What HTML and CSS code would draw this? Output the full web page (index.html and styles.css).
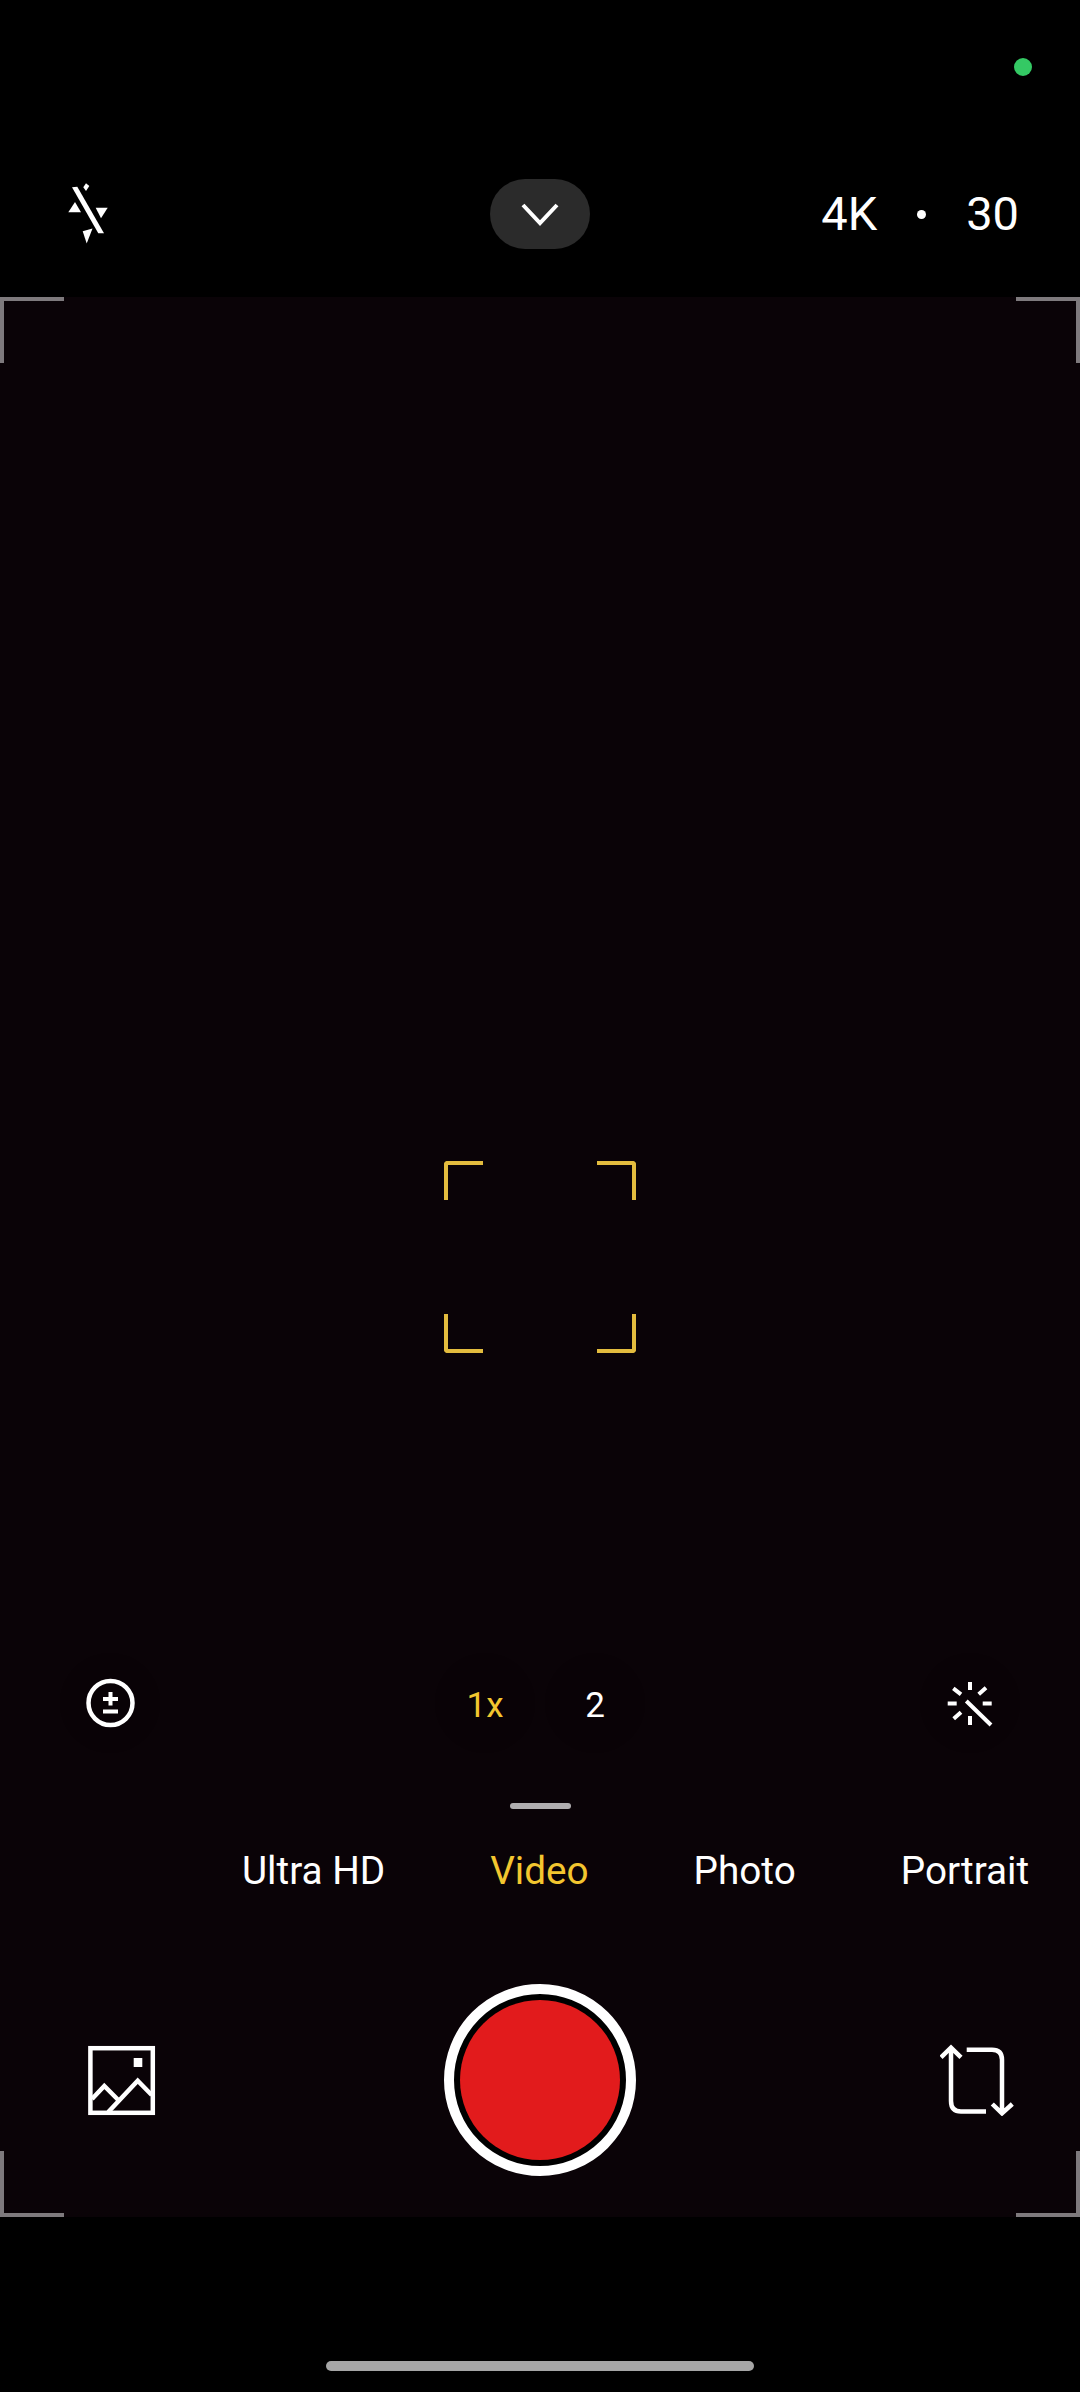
FILE: index.html
```html
<!DOCTYPE html>
<html lang="en">

<head>
  <meta charset="UTF-8">
  <title>Camera</title>
  <meta name="viewport" content="width=device-width, initial-scale=1.0">
  <link rel="stylesheet" href="styles.css">
</head>

<body>
  <header class="top">
    <div class="status"><i class="status-dot"></i></div>
    <div class="toolbar">
      <svg class="flash" viewBox="0 0 48 68" aria-label="Flash off">
        <polygon points="8,7.3 13.3,6.7 40,53.3 34.3,53.3"/>
        <polygon points="19.3,7.3 22,3.3 25.3,6 22,11"/>
        <polygon points="4.3,32.3 11,22 17,32.3"/>
        <polygon points="31.7,27.7 43.7,27.7 37,38.3"/>
        <polygon points="18.7,51.3 28.5,48.5 22.7,63.5"/>
      </svg>
      <div class="more">
        <svg viewBox="0 0 38 24" class="chevron"><path d="M2 3 L19 21 L36 3"/></svg>
      </div>
      <div class="format">
        <span>4K</span>
        <i class="format-dot"></i>
        <span>30</span>
      </div>
    </div>
  </header>

  <main class="preview">
    <!-- viewfinder corners -->
    <span class="mark mark-tl"></span>
    <span class="mark mark-tr"></span>
    <span class="mark mark-bl"></span>
    <span class="mark mark-br"></span>

    <!-- focus box -->
    <div class="focus">
      <span class="arm arm-tl"></span>
      <span class="arm arm-tr"></span>
      <span class="arm arm-bl"></span>
      <span class="arm arm-br"></span>
    </div>

    <div class="controls">
      <div class="round">
        <svg class="line" viewBox="0 0 100 100" aria-label="Exposure">
          <circle cx="50.5" cy="50" r="22"/>
          <path class="thin" d="M43 46 H58 M50.5 39 V52.5 M43 58.5 H58"/>
        </svg>
      </div>
      <div class="zoom">
        <button class="round zoom-btn active">1x</button>
        <button class="round zoom-btn">2</button>
      </div>
      <div class="round">
        <svg class="line" viewBox="0 0 100 100" aria-label="Filters">
          <path class="thin" d="M50 29 V37 M27.7 50.5 H36.7 M62.7 50.5 H71.7 M50 63 V72 M33.3 35.3 L41 41.3 M58.7 41.3 L66 34.7 M33.7 65.7 L41 59.3 M46.3 48 L71 72"/>
        </svg>
      </div>
    </div>

    <div class="handle"></div>

    <nav class="modes">
      <span>Ultra HD</span>
      <span class="active">Video</span>
      <span>Photo</span>
      <span>Portrait</span>
    </nav>

    <div class="capture">
      <svg class="line gallery" viewBox="0 0 70 72" aria-label="Gallery">
        <rect x="4.4" y="4.2" width="62.4" height="64.6"/>
        <rect class="sun" x="47.7" y="14" width="8.6" height="9"/>
        <path d="M6 55 L18.3 42 L32.3 56 M22.3 68 L51.7 36.7 L65.7 51"/>
      </svg>
      <button class="shutter"><i></i></button>
      <svg class="line flip" viewBox="0 0 74 72" aria-label="Switch camera">
        <path d="M11 5 V57 Q11 67.5 21 67.5 H46 M1 13.3 L11 3.7 L21 13.3"/>
        <path d="M26.7 5.7 H52 Q62 5.7 62 15.7 V68 M52.3 60 L62 69.3 L72.3 60"/>
      </svg>
    </div>
  </main>

  <footer class="bottom">
    <div class="home-bar"></div>
  </footer>
</body>

</html>
```

FILE: styles.css
```css
/* Colors */
:root {
  --black: #000000;
  --preview-bg: #0a0307;
  --white: #ffffff;
  --yellow: #f3c62f;
  --focus: #e3bc3e;
  --mark: #7e7a7d;
}

* {
  box-sizing: border-box;
}

html, body {
  margin: 0;
  background-color: var(--black);
}

body {
  width: 1080px;
  height: 2392px;
  overflow: hidden;
  font-family: Roboto, sans-serif;
  color: var(--white);
}

button {
  font: inherit;
  color: inherit;
  background: none;
  border: none;
  padding: 0;
}

/* top bar */
.top {
  height: 297px;
  padding-top: 58px;
}

.status {
  display: flex;
  justify-content: flex-end;
  padding-right: 48px;
}
.status-dot {
  width: 18px;
  height: 18px;
  border-radius: 50%;
  background-color: #34c964;
}

.toolbar {
  display: grid;
  grid-template-columns: 1fr 100px 1fr;
  align-items: center;
  margin-top: 103px;
  height: 70px;
}

.flash {
  width: 48px;
  height: 68px;
  margin-left: 64px;
  fill: var(--white);
}

.more {
  display: flex;
  align-items: center;
  justify-content: center;
  height: 70px;
  border-radius: 35px;
  background-color: #2b2b2b;
}
.chevron {
  width: 38px;
  height: 24px;
  fill: none;
  stroke: var(--white);
  stroke-width: 4;
}

.format {
  display: flex;
  align-items: center;
  justify-content: flex-end;
  gap: 40px;
  padding-right: 61px;
  font-size: 47px;
  line-height: 70px;
}
.format-dot {
  width: 9px;
  height: 9px;
  border-radius: 50%;
  background-color: var(--white);
}

/* viewfinder */
.preview {
  position: relative;
  height: 1920px;
  padding-top: 1356px;
  background-color: var(--preview-bg);
}

.mark {
  position: absolute;
  width: 64px;
  height: 66px;
  border: 0 solid var(--mark);
}
.mark-tl { top: 0; left: 0; border-width: 4px 0 0 4px }
.mark-tr { top: 0; right: 0; border-width: 4px 4px 0 0 }
.mark-bl { bottom: 0; left: 0; border-width: 0 0 4px 4px }
.mark-br { bottom: 0; right: 0; border-width: 0 4px 4px 0 }

.focus {
  position: absolute;
  top: 864px;
  left: 444px;
  width: 192px;
  height: 192px;
}
.arm {
  position: absolute;
  width: 39px;
  height: 39px;
  border: 0 solid var(--focus);
}
.arm-tl { top: 0; left: 0; border-width: 4px 0 0 4px; border-top-left-radius: 4px }
.arm-tr { top: 0; right: 0; border-width: 4px 4px 0 0; border-top-right-radius: 4px }
.arm-bl { bottom: 0; left: 0; border-width: 0 0 4px 4px; border-bottom-left-radius: 4px }
.arm-br { bottom: 0; right: 0; border-width: 0 4px 4px 0; border-bottom-right-radius: 4px }

/* exposure, zoom, filters */
.controls {
  display: flex;
  justify-content: space-between;
  padding: 0 60px;
}

.round {
  width: 100px;
  height: 100px;
  border-radius: 50%;
  background-color: rgba(0, 0, 0, .09);
}

.line {
  display: block;
  fill: none;
  stroke: var(--white);
  stroke-width: 4.5;
}
.line .thin {
  stroke-width: 4;
}

.zoom {
  display: flex;
  gap: 10px;
}
.zoom-btn {
  padding-top: 3px;
  font-size: 35px;
  line-height: 100px;
  text-align: center;
}
.zoom-btn.active {
  color: var(--yellow);
}

.handle {
  width: 61px;
  height: 6px;
  margin: 50px auto 0;
  border-radius: 3px;
  background-color: #b0aeb0;
}

/* camera modes */
.modes {
  display: flex;
  gap: 105px;
  margin-top: 38px;
  padding-left: 242px;
  font-size: 38.7px;
  line-height: 48px;
  white-space: nowrap;
}
.modes .active {
  color: var(--yellow);
}

/* shutter row */
.capture {
  display: grid;
  grid-template-columns: 1fr 192px 1fr;
  align-items: center;
  margin-top: 89px;
}

.gallery {
  width: 70px;
  height: 72px;
  margin-left: 86px;
}
.gallery .sun {
  fill: var(--white);
  stroke: none;
}

.shutter {
  display: flex;
  align-items: center;
  justify-content: center;
  width: 192px;
  height: 192px;
  border: 10px solid var(--white);
  border-radius: 50%;
  background-color: var(--black);
}
.shutter i {
  width: 160px;
  height: 160px;
  border-radius: 50%;
  background-color: #e21b1c;
}

.flip {
  width: 74px;
  height: 72px;
  justify-self: end;
  margin-right: 66px;
}

/* nav bar */
.bottom {
  height: 175px;
  padding-top: 144px;
}
.home-bar {
  width: 428px;
  height: 10px;
  margin: 0 auto;
  border-radius: 5px;
  background-color: #a6a6a6;
}
```
